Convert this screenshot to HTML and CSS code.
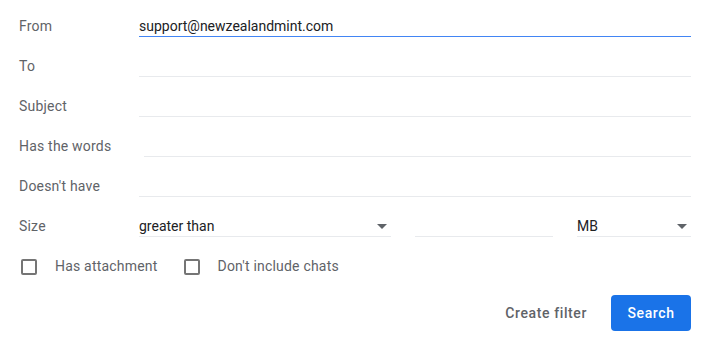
FILE: index.html
```html
<!DOCTYPE html>
<html lang="en">

<head>
    <meta charset="UTF-8">
    <meta name="viewport" content="width=device-width, initial-scale=1.0">
    <title>Search options</title>
    <link rel="stylesheet" href="styles.css">
</head>

<body>
    <div class="form">
        <div class="row">
            <label class="label">From</label>
            <div class="field active">support@newzealandmint.com</div>
        </div>
        <div class="row">
            <label class="label">To</label>
            <div class="field"></div>
        </div>
        <div class="row">
            <label class="label">Subject</label>
            <div class="field"></div>
        </div>
        <div class="row">
            <label class="label">Has the words</label>
            <div class="field wide"></div>
        </div>
        <div class="row">
            <label class="label">Doesn't have</label>
            <div class="field"></div>
        </div>
        <div class="row">
            <label class="label">Size</label>
            <div class="field select cmp">greater than<span class="arrow"></span></div>
            <div class="field num"></div>
            <div class="field select unit">MB<span class="arrow"></span></div>
        </div>

        <div class="checks">
            <div class="check"><span class="box"></span>Has attachment</div>
            <div class="check"><span class="box"></span>Don't include chats</div>
        </div>

        <div class="actions">
            <button class="btn flat">Create filter</button>
            <button class="btn primary">Search</button>
        </div>
    </div>
</body>

</html>
```

FILE: styles.css
```css
* {
    margin: 0;
    padding: 0;
    box-sizing: border-box;
}

body {
    font-family: Roboto, "Liberation Sans", Arial, sans-serif;
    font-size: 14px;
    color: #202124;
    background: #fff;
}

.form {
    padding: 12px 14px 0 19px;
    display: flex;
    flex-direction: column;
    gap: 15px;
}

.row {
    display: flex;
    align-items: flex-end;
    height: 25px;
}

.label {
    width: 120px;
    flex-shrink: 0;
    line-height: 20px;
    padding-bottom: 1px;
    color: #5f6368;
    letter-spacing: 0.2px;
    white-space: nowrap;
}

.field {
    flex: 1;
    height: 25px;
    padding-top: 4px;
    line-height: 20px;
    border-bottom: 1px solid #e8eaed;
    white-space: nowrap;
}

.field.active {
    border-bottom-color: #4285f4;
}

.field.wide {
    margin-left: 5px;
}

.select {
    position: relative;
}

.cmp {
    flex: none;
    width: 252px;
    margin-right: 24px;
}

.num {
    flex: none;
    width: 138px;
    margin-right: 24px;
}

.unit {
    flex: none;
    width: 114px;
}

.arrow {
    position: absolute;
    right: 4px;
    top: 12px;
    width: 0;
    height: 0;
    border-left: 5px solid transparent;
    border-right: 5px solid transparent;
    border-top: 5px solid #5f6368;
}

.checks {
    display: flex;
    align-items: center;
    margin-top: 4px;
    height: 20px;
    color: #5f6368;
    letter-spacing: 0.2px;
}

.check {
    display: flex;
    align-items: center;
    line-height: 20px;
    margin-right: 26px;
}

.check .box {
    width: 16px;
    height: 16px;
    border: 2px solid #757575;
    border-radius: 2px;
    margin: 1px 18px 0 2px;
}

.check + .check .box {
    margin-left: 0;
}

.actions {
    display: flex;
    justify-content: flex-end;
    gap: 12px;
    margin-top: 4px;
}

.btn {
    height: 36px;
    border: none;
    border-radius: 4px;
    font-family: Roboto, "Liberation Sans", Arial, sans-serif;
    font-size: 14px;
    font-weight: 500;
    letter-spacing: 0.6px;
    background: none;
    cursor: pointer;
}

.btn.flat {
    padding: 0 12px;
    color: #5f6368;
}

.btn.primary {
    width: 80px;
    background: #1a73e8;
    color: #fff;
}
```
